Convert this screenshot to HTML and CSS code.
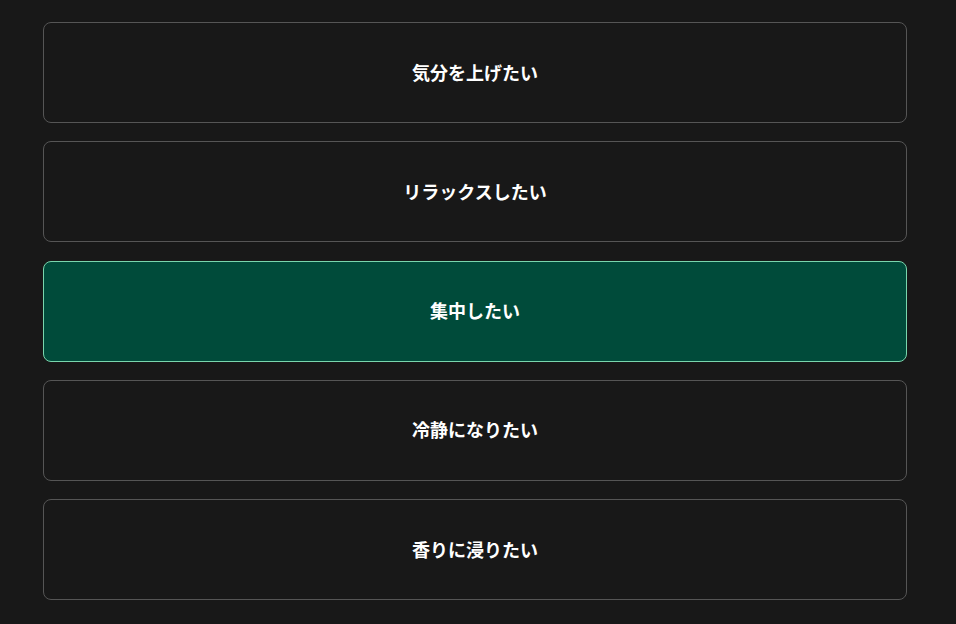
FILE: index.html
```html
<!DOCTYPE html>
<html lang="ja">
<head>
<meta charset="utf-8">
<link rel="stylesheet" href="styles.css">
</head>
<body>
<div class="list">
  <button class="card">気分を上げたい</button>
  <button class="card">リラックスしたい</button>
  <button class="card selected">集中したい</button>
  <button class="card">冷静になりたい</button>
  <button class="card">香りに浸りたい</button>
</div>
</body>
</html>
```
FILE: styles.css
```css
html, body {
  margin: 0;
  padding: 0;
  background: #181818;
}
body {
  font-family: "Noto Sans CJK JP", "Noto Sans", sans-serif;
}
.list {
  display: flex;
  flex-direction: column;
  gap: 18.25px;
  width: 864px;
  padding: 22px 0 0 43px;
}
.card {
  height: 101px;
  box-sizing: border-box;
  background: #181818;
  border: 1px solid #555555;
  border-radius: 8px;
  color: #ffffff;
  font-family: inherit;
  font-size: 18px;
  font-weight: 700;
  display: flex;
  align-items: center;
  justify-content: center;
  padding: 0 0 2px 0;
}
.card.selected {
  background: #004b3a;
  border-color: #79d6ad;
}
```
